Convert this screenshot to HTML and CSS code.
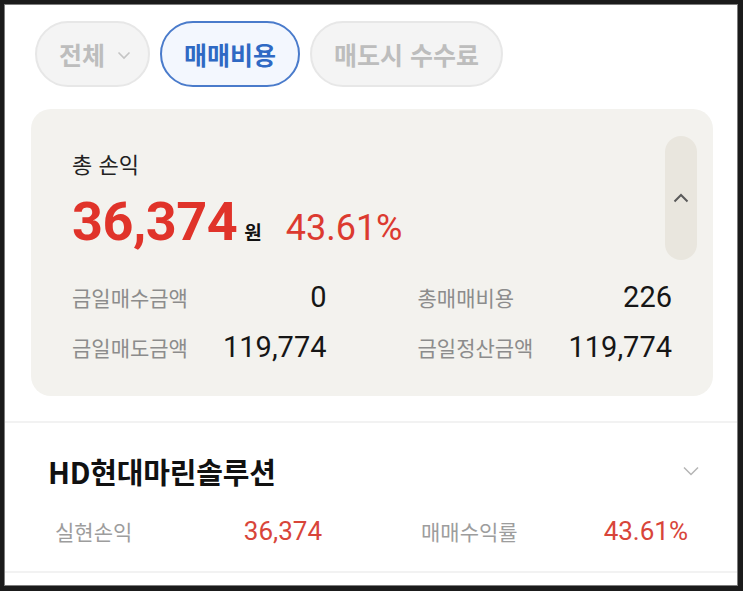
FILE: index.html
```html
<!DOCTYPE html>
<html lang="ko">
<head>
<meta charset="utf-8">
<link rel="stylesheet" href="styles.css">
</head>
<body>
<div class="screen">
  <div class="chips">
    <div class="chip chip-all"><span>전체</span>
      <svg class="chip-caret" width="14" height="9" viewBox="0 0 14 9"><path d="M1.5 1.5 L7 7 L12.5 1.5" fill="none" stroke="#c4c4c4" stroke-width="1.6"/></svg>
    </div>
    <div class="chip chip-active">매매비용</div>
    <div class="chip">매도시 수수료</div>
  </div>

  <div class="card">
    <div class="card-head">
      <div class="head-main">
        <div class="head-title">총 손익</div>
        <div class="head-amount">
          <span class="big-num">36,374</span><span class="won">원</span><span class="rate">43.61%</span>
        </div>
      </div>
      <div class="collapse-btn">
        <svg width="16" height="10" viewBox="0 0 16 10"><path d="M1.5 8.5 L8 2 L14.5 8.5" fill="none" stroke="#5a5a5a" stroke-width="2"/></svg>
      </div>
    </div>
    <div class="card-grid">
      <div class="kv"><span class="k">금일매수금액</span><span class="v">0</span></div>
      <div class="kv"><span class="k">총매매비용</span><span class="v">226</span></div>
      <div class="kv"><span class="k">금일매도금액</span><span class="v">119,774</span></div>
      <div class="kv"><span class="k">금일정산금액</span><span class="v">119,774</span></div>
    </div>
  </div>

  <div class="stock">
    <div class="stock-head">
      <div class="stock-name">HD현대마린솔루션</div>
      <svg width="16" height="10" viewBox="0 0 16 10"><path d="M1 1.5 L8 8.5 L15 1.5" fill="none" stroke="#b5b5b5" stroke-width="1.5"/></svg>
    </div>
    <div class="stock-grid">
      <div class="kv"><span class="sk">실현손익</span><span class="sv">36,374</span></div>
      <div class="kv"><span class="sk">매매수익률</span><span class="sv">43.61%</span></div>
    </div>
  </div>
</div>
</body>
</html>
```

FILE: styles.css
```css
html, body {
  margin: 0;
  padding: 0;
  background: #1b1b1b;
}
body {
  padding: 4px 5px 5px 4px;
  font-family: Roboto, "Noto Sans CJK KR", sans-serif;
}
.screen {
  width: 732px;
  height: 580px;
  background: #ffffff;
  border: 1px solid #7d7d7d;
  overflow: hidden;
}
.chips {
  display: flex;
  gap: 10px;
  padding: 16px 0 0 30px;
}
.chip {
  box-sizing: border-box;
  height: 66px;
  border-radius: 33px;
  border: 2px solid #e7e7e7;
  background: #f4f4f4;
  color: #bdbdbd;
  font-family: "Noto Sans CJK KR", sans-serif;
  font-weight: 700;
  font-size: 25px;
  display: flex;
  align-items: center;
  padding: 0 22px;
}
.chip-all {
  padding: 0 17px 0 22px;
  gap: 12px;
}
.chip-caret { margin-top: 3px; }
.chip-active {
  border-color: #4a7bcb;
  background: #f3f7fe;
  color: #2f69c4;
}
.card {
  margin: 22px 24px 0 26px;
  height: 287px;
  box-sizing: border-box;
  background: #f3f2ee;
  border-radius: 20px;
  padding: 27px 16px 0 41px;
}
.card-head {
  display: flex;
  justify-content: space-between;
}
.head-main {
  padding-top: 13px;
}
.head-title {
  font-family: "Noto Sans CJK KR", sans-serif;
  font-size: 22px;
  line-height: 28px;
  color: #222;
}
.head-amount {
  margin-top: 15px;
  height: 60px;
  display: flex;
  align-items: baseline;
  line-height: 60px;
}
.big-num {
  font-size: 54px;
  font-weight: 700;
  color: #e0332a;
  letter-spacing: -0.5px;
}
.won {
  font-family: "Noto Sans CJK KR", sans-serif;
  font-size: 19px;
  font-weight: 700;
  color: #111;
  margin-left: 7px;
}
.rate {
  font-size: 36px;
  color: #dc3a30;
  margin-left: 24px;
}
.collapse-btn {
  width: 32px;
  height: 124px;
  border-radius: 16px;
  background: #e9e6de;
  display: flex;
  align-items: center;
  justify-content: center;
}
.card-grid {
  margin: 19px 25px 0 0;
  display: grid;
  grid-template-columns: 1fr 1fr;
  column-gap: 91px;
  row-gap: 14px;
}
.kv {
  display: flex;
  justify-content: space-between;
  align-items: center;
  height: 36px;
}
.k {
  font-family: "Noto Sans CJK KR", sans-serif;
  font-size: 21px;
  color: #8c8c8c;
}
.v {
  font-size: 29px;
  color: #161616;
}
.stock {
  margin-top: 25px;
  border-top: 2px solid #f2f2f2;
  border-bottom: 2px solid #f2f2f2;
  padding: 28px 0 24px;
}
.stock-head {
  display: flex;
  justify-content: space-between;
  align-items: center;
  padding: 0 38px 0 43px;
  height: 40px;
}
.stock-name {
  font-family: "Noto Sans CJK KR", sans-serif;
  font-weight: 700;
  font-size: 29px;
  color: #111;
  letter-spacing: -0.2px;
}
.stock-grid {
  margin-top: 24px;
  padding: 0 49px 0 50px;
  display: grid;
  grid-template-columns: 1fr 1fr;
  column-gap: 99px;
}
.stock-grid .kv { height: 32px; }
.sk {
  font-family: "Noto Sans CJK KR", sans-serif;
  font-size: 21px;
  color: #9d9d9d;
}
.sv {
  font-size: 26px;
  color: #d8453a;
}
```
